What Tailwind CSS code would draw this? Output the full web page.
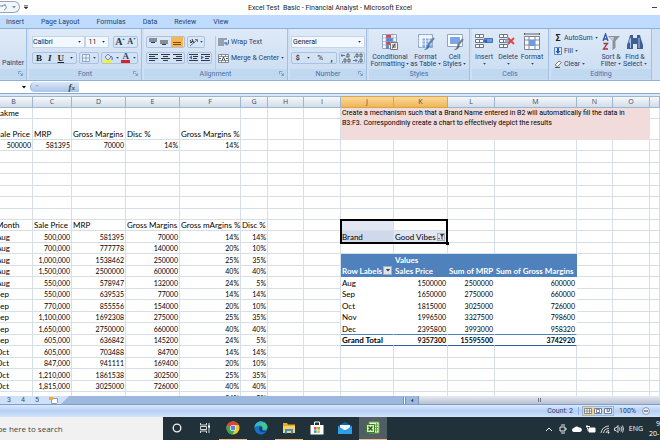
<!DOCTYPE html>
<html lang="en">
  <head>
    <meta charset="UTF-8" />
    <meta name="viewport" content="width=device-width, initial-scale=1.0" />
    <title>Excel Test Basic - Financial Analyst - Microsoft Excel</title>
    <script src="https://cdn.jsdelivr.net/npm/@tailwindcss/browser@4"></script>
  </head>
  <body class="flex flex-col h-screen overflow-hidden bg-white font-['Roboto',sans-serif] text-[7px] leading-[8px] text-[#27436f]">
    <!-- Shared icons -->
    <svg class="hidden">
      <symbol id="down" viewBox="0 0 4 3"><path d="M0 0h4L2 2.6z" fill="currentColor" /></symbol>
      <symbol id="launch" viewBox="0 0 6 6"><path d="M.5 4V.5H4M2.5 2.5l2.500 2.500M5.300 2.800v2.500H2.800" fill="none" stroke="#6b88b4" stroke-width=".9" /></symbol>
      <symbol id="lines" viewBox="0 0 9 8"><path d="M0 .5h9M0 2.500h6M0 4.500h9M0 6.500h6" stroke="#33373f" /></symbol>
      <symbol id="cells" viewBox="0 0 16 16"><path d="M.5 1.500h8v3h-8zM.5 6.500h8v3h-8zM.5 11.500h8v3h-8zM4.500 1.500v3M4.500 6.500v3M4.500 11.500v3" fill="#fff" stroke="#6c7686" /></symbol>
    </svg>

    <!-- Title bar -->
    <header class="relative flex items-center justify-center h-[15px] shrink-0 text-[#222]">
      <div class="absolute left-0 top-px flex items-center h-3 w-5 rounded-r-full border border-l-0 border-[#9aa6b8] bg-[#f3f6fa] text-[#7c93b5]">
        <svg class="w-2 h-2" viewBox="0 0 8 8"><path d="M0 3h3M4 7c3-1 3-5 0-5L2 3M5 1v2" fill="none" stroke="currentColor" /></svg>
        <svg class="w-1 h-[3px] ml-1"><use href="#down" /></svg>
      </div>
      <svg class="absolute left-6 top-[5px] w-1 h-1" viewBox="0 0 4 4"><path d="M0 .5h4M0 2h4L2 4z" fill="#333" stroke="#333" stroke-width=".6" /></svg>
      <h1 class="whitespace-pre">Excel Test  Basic - Financial Analyst - Microsoft Excel</h1>
      <button class="absolute right-[3px] top-[7px] w-[5px] h-px bg-[#444]" aria-label="Minimize"></button>
    </header>

    <nav class="flex items-center h-[13px] shrink-0 pl-[6px] gap-[17px] bg-[#bfdbff] text-[#27436f]">
      <a href="#">Insert</a>
      <a href="#">Page Layout</a>
      <a href="#">Formulas</a>
      <a href="#">Data</a>
      <a href="#">Review</a>
      <a href="#">View</a>
    </nav>

    <!-- Ribbon -->
    <div class="flex h-[53px] shrink-0 gap-[2px] border-y border-[#8fb0dc] bg-[#cfe0f5] [&>section]:flex [&>section]:flex-col [&>section]:shrink-0 [&>section]:border-r [&>section]:border-[#a3bfe2] [&>section]:bg-linear-to-b [&>section]:from-[#dfeaf7] [&>section]:to-[#c9dcf2] [&_h2]:relative [&_h2]:h-[10px] [&_h2]:mb-px [&_h2]:text-center [&_h2]:leading-[10px] [&_h2]:bg-[#c1d8f1] [&_h2]:text-[#4a70a8] [&_button]:whitespace-nowrap">
      <section class="w-[27px]">
        <div class="flex-1 pt-[30px] pl-[2px]"><button>Painter</button></div>
        <h2><svg class="absolute right-[3px] top-[2px] w-[5px] h-[5px]"><use href="#launch" /></svg></h2>
      </section>

      <section class="w-[113px]">
        <div class="flex-1 flex flex-col gap-1 pt-[7px] px-[3px]">
          <div class="flex h-3 items-center">
            <label class="relative w-[54px] h-3 bg-[#f3f8fe] border border-[#c3d5ec] text-[#222]">
              <select aria-label="Font name" class="block w-full h-[10px] appearance-none leading-[10px]"><option>Calibri</option></select>
              <svg class="absolute right-[3px] top-1 w-[3px] h-[2px]"><use href="#down" /></svg>
            </label>
            <label class="relative w-6 h-3 bg-[#f3f8fe] border border-[#c3d5ec] text-[#222]">
              <select aria-label="Font size" class="block w-full h-[10px] pl-[2px] appearance-none leading-[10px]"><option>11</option></select>
              <svg class="absolute right-[3px] top-1 w-[3px] h-[2px]"><use href="#down" /></svg>
            </label>
            <div class="flex ml-1 w-[25px] h-3 items-center justify-around rounded-xs border border-[#a9c1e2] font-['Liberation_Serif',serif] font-bold text-[#26344d]">
              <button aria-label="Grow font" class="flex text-[10px]">A<svg class="w-[3px] h-[2px] rotate-180 text-[#3c6cb8]"><use href="#down" /></svg></button>
              <button aria-label="Shrink font" class="flex text-[8px]">A<svg class="w-[3px] h-[2px] text-[#3c6cb8]"><use href="#down" /></svg></button>
            </div>
          </div>
          <div class="flex h-3 items-center gap-[2px] [&>div]:flex [&>div]:items-center [&>div]:justify-around [&>div]:h-3 [&>div]:rounded-xs [&>div]:border [&>div]:border-[#a9c1e2]">
            <div class="w-[46px] font-['Liberation_Serif',serif] text-[9px] text-[#222]">
              <button class="font-bold">B</button>
              <button class="italic font-bold">I</button>
              <button class="underline font-bold">U</button>
              <svg class="w-[3px] h-[2px]"><use href="#down" /></svg>
            </div>
            <div class="w-5">
              <button aria-label="Borders"><svg class="w-[8px] h-[8px]" viewBox="0 0 8 8"><path d="M.5.5h7v7h-7zM4 .5v7M.5 4h7" fill="#eef4fc" stroke="#7f93b2" stroke-width=".8" /></svg></button>
              <svg class="w-[3px] h-[2px]"><use href="#down" /></svg>
            </div>
            <div class="w-[38px]">
              <button aria-label="Fill color"><svg class="w-[10px] h-[10px]" viewBox="0 0 10 10"><path d="M2 4l3-3 3 3-3 3z" fill="#dfe8f5" stroke="#55698c" stroke-width=".8" /><path d="M8 3q2 1 1 4" fill="none" stroke="#3c6cb8" /><path d="M0 7h9v3H0z" fill="#f6f03c" /></svg></button>
              <svg class="w-[3px] h-[2px]"><use href="#down" /></svg>
              <button aria-label="Font color" class="font-['Liberation_Serif',serif] font-bold text-[9px] leading-[7px] w-[9px] border-b-[3px] border-[#d8232a]">A</button>
              <svg class="w-[3px] h-[2px]"><use href="#down" /></svg>
            </div>
          </div>
        </div>
        <h2>Font<svg class="absolute right-[3px] top-[2px] w-[5px] h-[5px]"><use href="#launch" /></svg></h2>
      </section>

      <section class="w-[144px]">
        <div class="flex-1 flex pt-[7px] pl-[2px]">
          <div class="flex flex-col gap-1 w-[70px] border-r border-[#b4cbe7] [&>div]:flex [&>div]:gap-[2px] [&>div>div]:flex [&>div>div]:items-center [&>div>div]:justify-around [&>div>div]:h-3 [&>div>div]:rounded-xs [&>div>div]:border [&>div>div]:border-[#a9c1e2]">
            <div>
              <div class="w-[39px]">
                <button aria-label="Top align"><svg class="w-[8px] h-[8px]" viewBox="0 0 8 8"><path d="M0 1h8M0 3h8M2 4.500h4" stroke="#33373f" /></svg></button>
                <button aria-label="Middle align"><svg class="w-[8px] h-[8px]" viewBox="0 0 8 8"><path d="M0 3h8M0 5h8M2 6.500h4" stroke="#33373f" /></svg></button>
                <button aria-label="Bottom align" class="h-[10px] px-[2px] bg-[#fbb54b]"><svg class="w-[8px] h-[8px]" viewBox="0 0 8 8"><path d="M0 4.500h8M0 6.500h8" stroke="#7a4a12" /></svg></button>
              </div>
              <div class="w-[18px]">
                <button aria-label="Orientation"><svg class="w-[9px] h-[9px]" viewBox="0 0 9 9"><path d="M1 8l7-6M6 1.500h2.500V4" fill="none" stroke="#55698c" stroke-width=".9" /><path d="M1 2l2 3M3 1l2 4M1 5l3-2" stroke="#33373f" /></svg></button>
                <svg class="w-[3px] h-[2px]"><use href="#down" /></svg>
              </div>
            </div>
            <div>
              <div class="w-[39px]">
                <button aria-label="Align left"><svg class="w-[9px] h-2"><use href="#lines" /></svg></button>
                <button aria-label="Center"><svg class="w-[9px] h-2" viewBox="0 0 9 8"><path d="M0 .5h9M2 2.500h5M0 4.500h9M2 6.500h5" stroke="#33373f" /></svg></button>
                <button aria-label="Align right"><svg class="w-[9px] h-2 -scale-x-100"><use href="#lines" /></svg></button>
              </div>
              <div class="w-[25px]">
                <button aria-label="Decrease indent"><svg class="w-[9px] h-2" viewBox="0 0 9 8"><path d="M0 .5h9M4 2.500h5M4 4.500h4M0 6.500h9" stroke="#33373f" /><path d="M3 1.500v4L0 3.500z" fill="#3c6cb8" /></svg></button>
                <button aria-label="Increase indent"><svg class="w-[9px] h-2" viewBox="0 0 9 8"><path d="M0 .5h9M4 2.500h5M4 4.500h4M0 6.500h9" stroke="#33373f" /><path d="M0 1.500v4l3-2z" fill="#3c6cb8" /></svg></button>
              </div>
            </div>
          </div>
          <div class="flex flex-col gap-1 pl-[2px]">
            <button class="flex items-center gap-[2px] h-3">
              <svg class="w-[11px] h-[9px]" viewBox="0 0 11 9"><path d="M0 1h9M0 3h6M0 5h9M0 7h6" stroke="#50596a" /><path d="M10.500 2v4H8M9 4.500L7.500 6 9 7.500" fill="none" stroke="#3c6cb8" stroke-width=".9" /></svg>Wrap Text
            </button>
            <button class="flex items-center gap-[2px] h-3">
              <svg class="w-[11px] h-[9px]" viewBox="0 0 11 9"><path d="M.5.5h10v8H.5zM.5 2.500h10M.5 6.500h10M3.500.5v2M7.500.5v2M3.500 6.500v2M7.500 6.500v2" fill="#fff" stroke="#6c7686" stroke-width=".8" /><path d="M1 4.500h2M8 4.500h2M4.300 6l1.200-3 1.200 3" stroke="#222" stroke-width=".8" fill="none" /></svg>Merge &amp; Center
              <svg class="w-[3px] h-[2px]"><use href="#down" /></svg>
            </button>
          </div>
        </div>
        <h2>Alignment<svg class="absolute right-[3px] top-[2px] w-[5px] h-[5px]"><use href="#launch" /></svg></h2>
      </section>

      <section class="w-[77px]">
        <div class="flex-1 flex flex-col gap-1 pt-[7px] px-[1px]">
          <label class="relative w-[74px] h-3 bg-[#f3f8fe] border border-[#c3d5ec] text-[#222]">
            <select aria-label="Number format" class="block w-full h-[10px] pl-px appearance-none leading-[10px]"><option>General</option></select>
            <svg class="absolute right-[3px] top-1 w-[3px] h-[2px]"><use href="#down" /></svg>
          </label>
          <div class="flex gap-[2px] font-bold text-[#333] [&>div]:flex [&>div]:items-center [&>div]:justify-around [&>div]:h-3 [&>div]:rounded-xs [&>div]:border [&>div]:border-[#a9c1e2]">
            <div class="w-[47px]">
              <button>$</button>
              <svg class="w-[3px] h-[2px]"><use href="#down" /></svg>
              <button class="font-normal text-[8px]">%</button>
              <button class="text-[9px]">,</button>
            </div>
            <div class="w-[26px]">
              <button aria-label="Increase decimal"><svg class="w-[10px] h-[10px]" viewBox="0 0 10 10"><path d="M0 2.500h4M1.500 1L0 2.500 1.500 4" fill="none" stroke="#3c6cb8" stroke-width=".9" /><path d="M6 1h2v3H6zM3 6h2v3H3zM7 6h2v3H7z" fill="none" stroke="#444" stroke-width=".8" /><path d="M1 9h1M4.800 4h.7" stroke="#444" /></svg></button>
              <button aria-label="Decrease decimal"><svg class="w-[10px] h-[10px]" viewBox="0 0 10 10"><path d="M0 7.500h4M2.500 6L4 7.500 2.500 9" fill="none" stroke="#3c6cb8" stroke-width=".9" /><path d="M3 1h2v3H3zM7 1h2v3H7zM7 6h2v3H7z" fill="none" stroke="#444" stroke-width=".8" /><path d="M1 4h1M5 9h1" stroke="#444" /></svg></button>
            </div>
          </div>
        </div>
        <h2>Number<svg class="absolute right-[3px] top-[2px] w-[5px] h-[5px]"><use href="#launch" /></svg></h2>
      </section>

      <section class="w-[101px]">
        <div class="flex-1 flex pt-[4px] pl-px leading-[7px] [&_button]:flex [&_button]:flex-col [&_button]:items-center [&_button>svg]:w-[18px] [&_button>svg]:h-[18px] [&_button>svg]:mb-[3px]">
          <button class="w-[40px]">
            <svg viewBox="0 0 18 18"><path d="M1.500 1.500h14v14h-14z" fill="#fff" stroke="#8ea5c8" /><path d="M5 2h5v3H5zM5 9h4v3H5z" fill="#e2413f" /><path d="M5 5h7v4H5zM5 12h3v4H5z" fill="#5b86d6" /><path d="M1.500 5h14M1.500 8.500h14M1.500 12h14M5 1.500v14M12 1.500v14" stroke="#8ea5c8" stroke-width=".7" /><path d="M9.500 9.500h7v7h-7z" fill="#f3f3f3" stroke="#777" /><path d="M11 12h4M11 14h4M14 10.500l-2.500 5" stroke="#333" stroke-width=".8" /></svg>
            <span>Conditional</span><span>Formatting <svg class="inline w-[3px] h-[2px]"><use href="#down" /></svg></span>
          </button>
          <button class="w-[31px]">
            <svg viewBox="0 0 18 18"><path d="M1.500 1.500h14v13h-14z" fill="#e9f1fd" stroke="#8ea5c8" /><path d="M5 5h10v9H5z" fill="#86aee8" /><path d="M1.500 5h14M1.500 8h14M1.500 11h14M5 1.500v13M8.500 1.500v13M12 1.500v13" stroke="#fff" stroke-width=".8" /><path d="M17 5l-6 7" stroke="#777f8f" stroke-width="2" /><path d="M11 11l2 2q-2 4-6 4 3-2 4-6z" fill="#4671b5" /></svg>
            <span>Format</span><span>as Table <svg class="inline w-[3px] h-[2px]"><use href="#down" /></svg></span>
          </button>
          <button class="w-[27px]">
            <svg viewBox="0 0 18 18"><path d="M1.500 1.500h15v12h-15z" fill="#fff" stroke="#8ea5c8" /><path d="M4 4h10v7H4z" fill="#7ba6ea" /><path d="M17 6l-5 6" stroke="#777f8f" stroke-width="2" /><path d="M12 11l2 2q-2 4-6 4 3-2 4-6z" fill="#6b6f78" /></svg>
            <span>Cell</span><span>Styles <svg class="inline w-[3px] h-[2px]"><use href="#down" /></svg></span>
          </button>
        </div>
        <h2>Styles</h2>
      </section>

      <section class="w-[77px]">
        <div class="flex-1 flex pt-[4px] leading-[7px] [&_button]:flex [&_button]:flex-col [&_button]:items-center [&_button]:w-6 [&_button>svg]:mb-[3px]">
          <button>
            <svg class="w-[18px] h-[18px]" viewBox="0 0 18 18"><use href="#cells" width="16" height="16" /><path d="M9.500 5.500h8v4h-8z" fill="#6f9be0" stroke="#4a73b5" /><path d="M12 6l-3 2 3 2" fill="#2a5cb0" /></svg>
            <span>Insert</span><svg class="w-[3px] h-[2px] mt-[2px]"><use href="#down" /></svg>
          </button>
          <button>
            <svg class="w-[18px] h-[18px]" viewBox="0 0 18 18"><use href="#cells" width="16" height="16" /><path d="M6 6.500h5v3H6z" fill="#8bb0e8" /><path d="M9 5l6 6M15 5l-6 6" stroke="#e0433d" stroke-width="1.800" /></svg>
            <span>Delete</span><svg class="w-[3px] h-[2px] mt-[2px]"><use href="#down" /></svg>
          </button>
          <button>
            <svg class="w-[18px] h-[18px]" viewBox="0 0 18 18"><path d="M1.500 3.500h15v13h-15zM1.500 7h15M1.500 12h15M6 3.500v13M12 3.500v13" fill="#fff" stroke="#7b8698" /><path d="M6 7h6v6H6z" fill="#6f9be0" /><path d="M1 1h16M1.500 0v2M16.500 0v2" stroke="#444" stroke-width=".8" /></svg>
            <span>Format</span><svg class="w-[3px] h-[2px] mt-[2px]"><use href="#down" /></svg>
          </button>
        </div>
        <h2>Cells</h2>
      </section>

      <section class="w-[101px]">
        <div class="flex-1 flex pl-[3px] pt-[4px]">
          <div class="flex flex-col gap-[4px] w-[45px] [&>button]:flex [&>button]:items-center [&>button]:gap-[2px] [&>button]:h-[9px]">
            <button><span class="w-2 text-[9px] font-bold text-[#222]">Σ</span>AutoSum <svg class="w-[3px] h-[2px]"><use href="#down" /></svg></button>
            <button><svg class="w-2 h-2" viewBox="0 0 8 8"><path d="M.5.5h7v7h-7z" fill="#dbe8fb" stroke="#5b86c8" /><path d="M3 1h2v3h1.500L4 7 1.500 4H3z" fill="#2459b5" /></svg>Fill <svg class="w-[3px] h-[2px]"><use href="#down" /></svg></button>
            <button><svg class="w-2 h-2" viewBox="0 0 8 8"><path d="M1 5l4-4 2.500 1.500-4 4z" fill="#fff" stroke="#666" stroke-width=".8" /><path d="M1 7.500h5" stroke="#333" stroke-width=".8" /></svg>Clear <svg class="w-[3px] h-[2px]"><use href="#down" /></svg></button>
          </div>
          <div class="flex leading-[7px] [&>button]:flex [&>button]:flex-col [&>button]:items-center [&>button]:w-6 [&>button>svg]:w-[18px] [&>button>svg]:h-[18px] [&>button>svg]:mb-[3px]">
            <button>
              <svg viewBox="0 0 18 18"><path d="M1 8l2.500-7L6 8M2 6h3" fill="none" stroke="#2c58a8" stroke-width="1.300" /><path d="M1.500 10.500h4L1.500 16h4.500" fill="none" stroke="#a8343a" stroke-width="1.300" /><path d="M6 3h12l-4.500 5v7l-3 2V8z" fill="#8d939d" /><path d="M7 4h5l-1 4z" fill="#c9ced6" /></svg>
              <span>Sort &amp;</span><span>Filter <svg class="inline w-[3px] h-[2px]"><use href="#down" /></svg></span>
            </button>
            <button>
              <svg viewBox="0 0 18 18"><path d="M4 2h3v3h4V2h3l1 4 2 6v4h-6v-5H7v5H1v-4l2-6z" fill="#3f5f93" /><path d="M3 10l1.500-5v10M13 5v10" fill="none" stroke="#a9c2e6" /></svg>
              <span>Find &amp;</span><span>Select <svg class="inline w-[3px] h-[2px]"><use href="#down" /></svg></span>
            </button>
          </div>
        </div>
        <h2>Editing</h2>
      </section>
    </div>

    <!-- Formula bar -->
    <div class="flex h-[13px] shrink-0 border-b border-[#8ba9d0] bg-white">
      <div class="flex items-center justify-end w-7 pr-[2px] text-black"><svg class="w-1 h-[3px]"><use href="#down" /></svg></div>
      <div class="flex items-center justify-between w-[49px] ml-[2px] my-px px-1 rounded-l-full border-l border-[#8ba9d0] bg-linear-to-b from-[#dce8f7] to-[#a9c4e8] text-[#444]">
        <span class="size-1 rounded-full border-t border-[#8ea5c8]"></span>
        <button class="font-['Liberation_Serif',serif] text-[9px] font-bold italic">f<span class="text-[7px]">x</span></button>
      </div>
      <input aria-label="Formula" class="flex-1 min-w-0 px-1 outline-none" />
    </div>

    <!-- Worksheet -->
    <main class="flex-1 min-h-0 overflow-hidden border-t-2 border-[#dbe8f8] font-['Lato','Open_Sans',sans-serif] text-black">
      <table class="table-fixed border-separate border-spacing-0 ml-[-5px] w-[calc(100%+5px)] leading-[10px] whitespace-nowrap [&_td]:p-0 [&_td]:px-px [&_td]:border-r [&_td]:border-b [&_td]:border-[#d6dfe8] [&_td]:align-bottom">
        <colgroup>
          <col class="w-[38px]" /><col class="w-[39px]" /><col class="w-[54px]" /><col class="w-[54px]" />
          <col class="w-[61px]" /><col class="w-[27px]" /><col class="w-[36px]" /><col class="w-[37px]" />
          <col class="w-[53px]" /><col class="w-[54px]" /><col class="w-[47px]" /><col class="w-[82px]" />
          <col class="w-[36px]" /><col class="w-[37px]" /><col />
        </colgroup>
        <thead>
          <tr id="letters" class="h-3 text-[#3a4a60]"></tr>
        </thead>
        <tbody id="rows"></tbody>
      </table>
    </main>

    <!-- Sheet tabs and horizontal scroll -->
    <div class="flex h-[9px] shrink-0 bg-[#9db8dd] border-b border-[#7f9dc8]">
      <div class="flex items-center h-2 w-[69px] pl-[7px] gap-[10px] bg-[#cfe0f7] text-[#2c4f8a] [clip-path:polygon(0_0,100%_0,calc(100%-8px)_100%,0_100%)]">
        <a href="#">3</a><a href="#">4</a><a href="#">5</a>
        <svg class="w-[9px] h-[7px]" viewBox="0 0 9 7"><path d="M2.500 1.500h6v4l-1 1h-5z" fill="#fff" stroke="#7188ae" stroke-width=".8" /><path d="M0 0h4v3H0z" fill="#e8a94a" /></svg>
      </div>
      <div class="flex items-center ml-auto w-[39%] h-2">
        <span class="w-[3px] h-[7px] bg-white border-x border-[#6f8fc0]"></span>
        <button aria-label="Scroll left" class="flex items-center justify-center w-3 h-2 text-[#27436f]"><svg class="w-1 h-[3px] rotate-90"><use href="#down" /></svg></button>
        <div class="flex flex-1 items-center justify-center h-2 border-l border-[#8794ab] bg-linear-to-b from-[#e6eaf1] to-[#b7c1d3]">
          <span class="w-[3px] h-1 border-x border-[#6d7890]"></span>
        </div>
      </div>
    </div>

    <!-- Status bar -->
    <div class="flex items-center justify-end h-3 shrink-0 pr-[10px] bg-linear-to-b from-[#dbe9fc] via-[#b5cff5] to-[#d3e3fa] text-[#27436f]">
      <span class="pr-[5px] border-r border-[#8fb0dc]">Count: 2</span>
      <div class="flex ml-[3px] mr-[5px] h-[10px] border border-[#9bb6dc] [&>button]:flex [&>button]:items-center [&>button]:justify-center [&>button]:w-[10px]">
        <button aria-label="Normal view" class="bg-[#fbd27a]"><svg class="w-[8px] h-[6px]" viewBox="0 0 8 6"><path d="M.5.5h7v5h-7zM.5 3h7M3 .5v5M5.500.5v5" fill="#fff" stroke="#5b6477" stroke-width=".7" /></svg></button>
        <button aria-label="Page layout view"><svg class="w-[8px] h-[6px]" viewBox="0 0 8 6"><path d="M.5.5h7v5h-7zM2.500 1.500h3v3h-3z" fill="#fff" stroke="#5b6477" stroke-width=".8" /></svg></button>
        <button aria-label="Page break view"><svg class="w-[8px] h-[6px]" viewBox="0 0 8 6"><path d="M.5.5h7v5h-7zM3 .5v3h2.500v-3" fill="#fff" stroke="#5b6477" stroke-width=".8" /></svg></button>
      </div>
      <span>100%</span>
      <button aria-label="Zoom out" class="ml-[6px]"><svg class="block w-2 h-2" viewBox="0 0 8 8"><circle cx="4" cy="4" r="3.400" fill="#eef4fc" stroke="#6f82a3" stroke-width=".8" /><path d="M2 4h4" stroke="#333" /></svg></button>
    </div>

    <!-- Windows taskbar -->
    <footer class="flex h-[23px] shrink-0 bg-[#213139] text-white font-['Open_Sans',sans-serif]">
      <div class="w-[163px] overflow-hidden bg-[#f1f1f1]">
        <input aria-label="Search" placeholder="Type here to search" class="ml-[-11px] w-full h-full text-[8px] outline-none placeholder:text-[#444]" />
      </div>
      <div class="flex [&>button]:flex [&>button]:items-center [&>button]:justify-center [&>button]:w-7 [&>button]:border-b">
        <button aria-label="Cortana" class="border-transparent"><svg class="w-[10px] h-[10px]" viewBox="0 0 10 10"><circle cx="5" cy="5" r="3.800" fill="none" stroke="#f3f3f3" stroke-width="1.300" /></svg></button>
        <button aria-label="Task view" class="border-transparent"><svg class="w-[11px] h-[10px]" viewBox="0 0 11 10"><path d="M.5 0v2h6V0M.5 3.500h6v3h-6zM.5 10V8h6v2M9 0v10" fill="none" stroke="#e8ebed" stroke-width=".9" /><path d="M8 2.500h2v2H8z" fill="#fff" /></svg></button>
        <button aria-label="Chrome" class="border-[#efb98a]"><svg class="w-[14px] h-[14px]" viewBox="0 0 14 14"><circle cx="7" cy="7" r="6.500" fill="#f5c52c" /><path d="M1.400 3.700A6.500 6.500 0 0 0 6.500 13.500L9 8.500 4.500 8.500z" fill="#36a853" /><path d="M1.400 3.700A6.500 6.500 0 0 1 12.700 4H7L4.500 8.500z" fill="#e04436" /><circle cx="7" cy="7" r="3" fill="#fff" /><circle cx="7" cy="7" r="2.400" fill="#4a87ee" /></svg></button>
        <button aria-label="Edge" class="border-transparent"><svg class="w-[14px] h-[14px]" viewBox="0 0 14 14"><circle cx="7" cy="7" r="6.500" fill="#1673c8" /><path d="M.5 6.500C1 2.500 4 .5 7 .5c4 0 6.500 3 6.500 5.500 0 3-3.500 3.500-5 2.500 1-2-.5-4-3-4-2 0-4 .8-5 2z" fill="#42c88a" /><path d="M.5 6.500C1 2.500 4 .5 7 .5c2 0 3 .8 4 1.500-4-.5-8 1-10.500 4.500z" fill="#31b3d8" /><path d="M5.500 6c-1.500 3 1 6 5.500 5.200l1.500-1.200c-3 1-5.500-.5-4.500-2.500C8.500 6.500 7 5 5.500 6z" fill="#143f73" /></svg></button>
        <button aria-label="File Explorer" class="border-[#efb98a]"><svg class="w-[14px] h-[12px]" viewBox="0 0 14 12"><path d="M1 1h4l1 1.500h7V11H1z" fill="#e5a92c" /><path d="M1 4h12v7H1z" fill="#fbd35c" /><path d="M3 7h8v4.500H9V9H5v2.500H3z" fill="#3f8fd6" /></svg></button>
        <button aria-label="Microsoft Store" class="border-transparent"><svg class="w-[14px] h-[14px]" viewBox="0 0 14 14"><path d="M4.500 4V1h5v3" fill="none" stroke="#fff" /><path d="M.5 4h13v9.500H.5z" fill="#fff" /><path d="M4 6h2.600v2.600H4z" fill="#e8502e" /><path d="M7.300 6h2.600v2.600H7.300z" fill="#7cb829" /><path d="M4 9.300h2.600v2.600H4z" fill="#22a0e6" /><path d="M7.300 9.300h2.600v2.600H7.300z" fill="#f7b51c" /></svg></button>
        <button aria-label="Mail" class="border-transparent"><svg class="w-[14px] h-[12px]" viewBox="0 0 14 12"><path d="M0 4l7-4 7 4v8H0z" fill="#0f64b4" /><path d="M2 3h10v5H2z" fill="#f4f8fc" /><path d="M0 4l7 4.500L14 4v8H0z" fill="#2d9fe8" /></svg></button>
        <button aria-label="Excel" class="border-[#efb98a] bg-[#505d63]"><svg class="w-[14px] h-[14px]" viewBox="0 0 14 14"><path d="M3 1h10v11H3z" fill="#e6f3d8" stroke="#6ba547" /><path d="M8 4h4M8 6.500h4M8 9h4M10.500 2v9" stroke="#6ba547" /><path d="M.5 3.500h8v8h-8z" fill="#d4ecc0" stroke="#3d7d2b" /><path d="M2.500 5.500l4 4M6.500 5.500l-4 4" stroke="#235c1c" stroke-width="1.500" /></svg></button>
      </div>
      <div class="flex items-center ml-auto gap-1 [&>svg]:w-[10px] [&>svg]:h-[10px]">
        <svg viewBox="0 0 10 10"><path d="M2 7l3-3 3 3" fill="none" stroke="#fff" /></svg>
        <svg viewBox="0 0 10 10"><path d="M2 3h5v4H2zM7 5h2M3 1h4M3 9h4" fill="none" stroke="#fff" stroke-width=".9" /></svg>
        <svg viewBox="0 0 10 10"><path d="M2 8a2 2 0 0 1 0-4 3 3 0 0 1 5-.5A2.300 2.300 0 0 1 8 8z" fill="#fff" /></svg>
        <svg viewBox="0 0 10 10"><path d="M3 4h6v4H3z" fill="#fff" stroke="#fff" /><path d="M0 2.500h4M1 1v3l1 1v2" fill="none" stroke="#fff" /></svg>
        <svg viewBox="0 0 10 10"><path d="M1 9a8 8 0 0 1 8-7M3.500 9A5.500 5.500 0 0 1 9 4.500M6 9a3 3 0 0 1 3-2.500" fill="none" stroke="#e3e6e8" stroke-width=".9" /><circle cx="8.500" cy="8.500" r=".9" fill="#fff" /></svg>
        <svg viewBox="0 0 10 10"><path d="M.5 4v2.500H2L4 8.500v-7L2 4zM5.500 3.500q1 1.500 0 3M7 2.500q2 2.500 0 5M8.500 1.500q2 3.500 0 7" fill="none" stroke="#fff" stroke-width=".8" /></svg>
        <span class="ml-px">ENG</span>
        <div class="w-[13px] h-full pt-[2px] pl-[2px] overflow-hidden whitespace-nowrap leading-[10px]">
          <div class="pl-[7px]">9:</div>
          <div>20-</div>
        </div>
      </div>
    </footer>

    <script>
      const letters = "BCDEFGHIJKLMNOP".split("");

      // Brand summary and sales data, columns B to G
      const left = {
        0: ["Lakme"],
        1: ["Sale Price", "MRP", "Gross Margins", "Disc %", "Gross Margins %"],
        2: ["500000", "581395", "70000", "14%", "14%"],
        9: ["Month", "Sale Price", "MRP", "Gross Margins", "Gross mArgins %", "Disc %"],
        10: ["Aug", "500,000", "581395", "70000", "14%", "14%"],
        11: ["Aug", "700,000", "777778", "140000", "20%", "10%"],
        12: ["Aug", "1,000,000", "1538462", "250000", "25%", "35%"],
        13: ["Aug", "1,500,000", "2500000", "600000", "40%", "40%"],
        14: ["Aug", "550,000", "578947", "132000", "24%", "5%"],
        15: ["Sep", "550,000", "639535", "77000", "14%", "14%"],
        16: ["Sep", "770,000", "855556", "154000", "20%", "10%"],
        17: ["Sep", "1,100,000", "1692308", "275000", "25%", "35%"],
        18: ["Sep", "1,650,000", "2750000", "660000", "40%", "40%"],
        19: ["Sep", "605,000", "636842", "145200", "24%", "5%"],
        20: ["Oct", "605,000", "703488", "84700", "14%", "14%"],
        21: ["Oct", "847,000", "941111", "169400", "20%", "10%"],
        22: ["Oct", "1,210,000", "1861538", "302500", "25%", "35%"],
        23: ["Oct", "1,815,000", "3025000", "726000", "40%", "40%"],
        24: ["", "", "", "", "24%", "5%"],
      };

      // Pivot table, columns J to M
      const pivot = {
        10: ["Brand", "Good Vibes"],
        12: ["", "Values", "", ""],
        13: ["Row Labels", "Sales Price", "Sum of MRP", "Sum of Gross Margins"],
        14: ["Aug", "1500000", "2500000", "600000"],
        15: ["Sep", "1650000", "2750000", "660000"],
        16: ["Oct", "1815000", "3025000", "726000"],
        17: ["Nov", "1996500", "3327500", "798600"],
        18: ["Dec", "2395800", "3993000", "958320"],
        19: ["Grand Total", "9357300", "15595500", "3742920"],
      };

      const filterBtn =
        '<button aria-label="Filter brand" class="absolute right-[2px] bottom-px size-2 bg-[#dfe3ea] border border-[#a5adba]"><svg class="block w-[6px] h-[6px]" viewBox="0 0 6 6"><path d="M2 0h4L4.500 2.500V6l-1-1V2.500zM0 4h2L1 5.500z" fill="#333"/></svg></button>';
      const dropBtn =
        '<button aria-label="Row labels menu" class="absolute right-px bottom-px flex items-center justify-center size-[9px] bg-[#dfe3ea] border border-[#a5adba] text-[#333]"><svg class="w-1 h-[3px]"><use href="#down"/></svg></button>';
      const selection =
        '<div class="absolute left-[-1px] top-[-1px] w-[108px] h-[25px] border-2 border-black pointer-events-none z-10"><span class="absolute right-[-3px] bottom-[-3px] size-[3px] bg-black"></span></div>';

      document.getElementById("letters").innerHTML = letters
        .map((l) => {
          const fill =
            l === "J" || l === "K"
              ? "bg-linear-to-b from-[#f9d99f] to-[#f1b64e] border-[#d9a54a]"
              : "bg-linear-to-b from-[#f6f9fc] to-[#d3dce9] border-[#9eb6ce]";
          return `<th class="p-0 border-r border-b border-t font-['Open_Sans',sans-serif] font-normal ${fill}">${l === "P" ? "" : l}</th>`;
        })
        .join("");

      function rowHeight(r) {
        if (r === 0) return "h-[11px]";
        if (r === 1) return "h-[21px]";
        if (r < 10) return r % 2 === 0 || r === 9 ? "h-[11px]" : "h-3";
        return r % 2 === 0 ? "h-3" : "h-[11px]";
      }

      function cell(r, c) {
        const inPivot = c >= 8 && c <= 11;
        let text = (left[r] && left[r][c]) || "";
        if (inPivot) text = (pivot[r] && pivot[r][c - 8]) || "";
        let cls = /^[\d,]+%?$/.test(text) ? "text-right" : "text-left text-[8px]";
        let extra = "";
        if (inPivot && (r === 12 || r === 13)) {
          cls += " bg-[#4f81bd] border-[#4f81bd]! text-white font-bold relative";
        }
        if (inPivot && r >= 14 && r <= 19) cls += " border-r-transparent!";
        if (inPivot && r >= 14 && r < 18) cls += " border-b-transparent!";
        if (inPivot && r === 18) cls += " border-b-[#4f81bd]!";
        if (inPivot && r === 19) cls += " font-bold border-b-[#2f5f9e]!";
        if (c === 8 && r === 9) {
          cls += " relative bg-[#e3e7f4]";
          extra = selection;
        }
        if (c === 8 && r === 10) cls += " bg-[#d0d9ec]";
        if (c === 9 && r === 10) {
          cls += " relative bg-[#e0e6f3]";
          extra = filterBtn;
        }
        if (c === 8 && r === 13) extra = dropBtn;
        return `<td class="${cls}">${text}${extra}</td>`;
      }

      let html = "";
      for (let r = 0; r < 25; r++) {
        html += `<tr class="${rowHeight(r)}">`;
        for (let c = 0; c < letters.length; c++) {
          // Merged note over J:O
          if (r < 2 && c >= 8 && c <= 13) {
            if (r === 0 && c === 8)
              html += `<td colspan="6" rowspan="2" class="align-top! bg-[#f2dcdb] border-[#f2dcdb]! font-['Roboto',sans-serif]">Create a mechanism such that a Brand Name entered in B2 will automatically fill the data in<br />B3:F3. Correspondinly create a chart to effectively depict the results</td>`;
            continue;
          }
          html += cell(r, c);
        }
        html += "</tr>";
      }
      document.getElementById("rows").innerHTML = html;
    </script>
  </body>
</html>
